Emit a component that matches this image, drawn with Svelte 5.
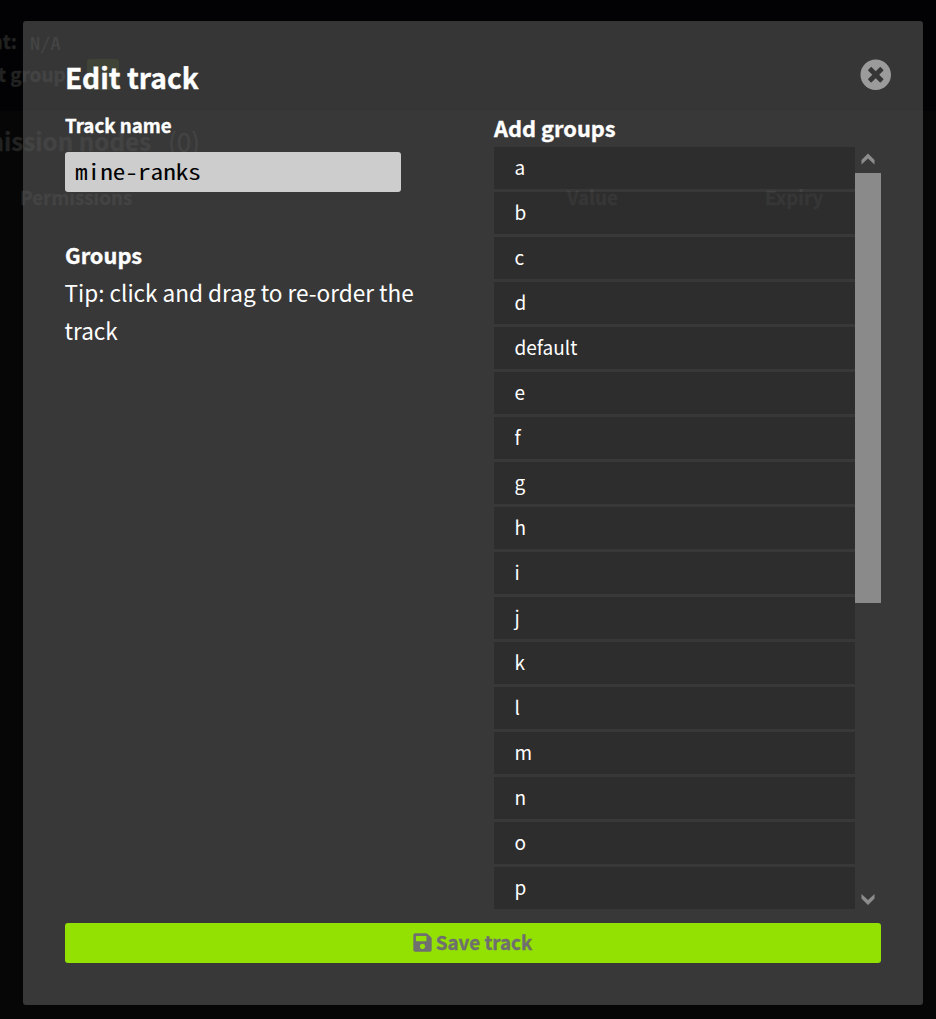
<script>
  const groups = ['a', 'b', 'c', 'd', 'default', 'e', 'f', 'g', 'h', 'i', 'j', 'k', 'l', 'm', 'n', 'o', 'p'];
  let name = $state('mine-ranks');
</script>

<div class="page">
  <div class="backdrop" aria-hidden="true">
    <div class="head">
      <div class="ghost parent">nt:</div>
      <div class="ghost na">N/A</div>
      <div class="ghost default">lt group:</div>
      <div class="badge"></div>
    </div>
    <div class="ghost nodes">mission nodes</div>
    <div class="ghost count">(0)</div>
    <div class="ghost col permissions">Permissions</div>
    <div class="ghost col value">Value</div>
    <div class="ghost col expiry">Expiry</div>
  </div>

  <div class="modal">
    <button class="close" aria-label="Close">
      <svg viewBox="0 0 512 512"><path fill="currentColor" d="M256 8C119 8 8 119 8 256s111 248 248 248 248-111 248-248S393 8 256 8zm121.6 313.1c4.7 4.7 4.7 12.3 0 17L338 377.6c-4.700 4.700-12.300 4.700-17 0L256 312l-65.100 65.600c-4.700 4.700-12.300 4.700-17 0L134.400 338c-4.700-4.700-4.700-12.300 0-17l65.600-65-65.600-65.100c-4.700-4.700-4.700-12.300 0-17l39.600-39.600c4.700-4.700 12.300-4.700 17 0l65 65.700 65.100-65.600c4.700-4.700 12.300-4.700 17 0l39.600 39.600c4.700 4.700 4.700 12.300 0 17L312 256l65.600 65.100z"/></svg>
    </button>
    <div class="columns">
      <section class="left">
        <h1>Edit track</h1>
        <label for="track">Track name</label>
        <div class="field"><input id="track" bind:value={name} spellcheck="false" /></div>
        <h2>Groups</h2>
        <p>Tip: click and drag to re-order the<br />track</p>
      </section>
      <section class="right">
        <h2>Add groups</h2>
        <div class="scroller">
          <ul>
            {#each groups as group}
              <li>{group}</li>
            {/each}
          </ul>
          <div class="bar">
            <svg viewBox="0 0 26 26"><path d="M13 6.500l6.500 6.500v4.500L13 11.500l-6.500 6v-4.500z" /></svg>
            <div class="thumb"></div>
            <svg class="down" viewBox="0 0 26 26"><path d="M13 4l6.500 6.500v4.500L13 9l-6.500 6v-4.500z" /></svg>
          </div>
        </div>
      </section>
    </div>
    <button class="save">
      <svg viewBox="0 0 448 512"><path fill="currentColor" d="M433.900 129.900l-83.900-83.900A48 48 0 0 0 316.100 32H48C21.500 32 0 53.500 0 80v352c0 26.500 21.500 48 48 48h352c26.500 0 48-21.500 48-48V163.900a48 48 0 0 0-14.100-34zM224 416c-35.300 0-64-28.700-64-64s28.700-64 64-64 64 28.700 64 64-28.700 64-64 64zm96-304.500V212c0 6.600-5.400 12-12 12H76c-6.600 0-12-5.400-12-12V108c0-6.600 5.400-12 12-12h228.500c3.200 0 6.200 1.300 8.500 3.500l3.500 3.500a12 12 0 0 1 3.500 8.500z"/></svg>
      <span>Save track</span>
    </button>
  </div>
</div>

<style>
  :global(body) { margin: 0; background: #050505; }
  * { box-sizing: border-box; }
  .page {
    position: relative;
    width: 936px;
    height: 1019px;
    padding: 21px 13px 14px 23px;
    overflow: hidden;
    background: #060606;
    color: #fff;
    font-family: "Noto Sans CJK SC", "Noto Sans", sans-serif;
  }
  .backdrop { position: absolute; inset: 0; font-weight: 700; white-space: nowrap; }
  .head { height: 111px; background: #020204; }
  .ghost { position: absolute; color: #222; line-height: 30px; font-size: 19px; -webkit-text-stroke: 0.35px; }
  .parent { right: 919px; top: 26px; }
  .na {
    left: 30px;
    top: 28px;
    color: #282828;
    font: 400 17px/30px "Noto Sans Mono CJK SC", "Liberation Mono", monospace;
    -webkit-text-stroke: 0;
    transform: scaleX(1.2);
    transform-origin: left;
  }
  .default { right: 864px; top: 59px; }
  .badge { position: absolute; left: 87px; top: 59px; width: 32px; height: 31px; border-radius: 3px; background: #182300; }
  .nodes { right: 785px; top: 126px; font-size: 24.200px; }
  .count { left: 168px; top: 126px; font-size: 26px; font-weight: 400; }
  .col { top: 182px; font-size: 18.800px; }
  .permissions { left: 20px; }
  .value { left: 567px; }
  .expiry { left: 765px; }

  .modal {
    position: relative;
    width: 900px;
    height: 984px;
    padding: 42px;
    border-radius: 3px;
    background: rgba(90, 90, 90, 0.6);
    display: flex;
    flex-direction: column;
    gap: 14px;
  }
  .close {
    position: absolute;
    top: 38px;
    right: 32px;
    width: 31px;
    height: 31px;
    padding: 0;
    border: 0;
    background: none;
    color: #9b9b9b;
  }
  .close svg { display: block; width: 31.500px; height: 31.500px; }
  .columns { flex: 1; min-height: 0; display: flex; justify-content: space-between; }
  .left { width: 360px; display: flex; flex-direction: column; }
  .right { width: 387px; padding-top: 46px; display: flex; flex-direction: column; }
  h1, h2, p { margin: 0; white-space: nowrap; }
  h1, h2, label, .save span { -webkit-text-stroke: 0.35px; }
  h1 { margin-top: -2px; font-size: 28.200px; line-height: 31px; font-weight: 700; }
  label { margin-top: 19px; font-size: 18.700px; line-height: 28px; font-weight: 700; }
  .field {
    width: 336px;
    height: 40px;
    margin-top: 13px;
    border-radius: 3px;
    background: #cdcdcd;
  }
  input {
    display: block;
    width: 280px;
    height: 38px;
    padding: 0 8.300px;
    border: 0;
    outline: 0;
    background: transparent;
    color: #000;
    font: 300 21px/38px "Noto Sans Mono CJK SC", "Liberation Mono", monospace;
    transform: scaleX(1.2);
    transform-origin: left;
  }
  h2 { font-size: 21.800px; line-height: 38px; font-weight: 700; }
  .left h2 { margin-top: 44px; }
  p { margin: -1px 0 0 -0.500px; font-size: 22.550px; line-height: 38px; }
  .right h2 { height: 38px; }
  .scroller { height: 762px; display: flex; }
  ul { flex: 1; margin: 0; padding: 0; list-style: none; display: flex; flex-direction: column; gap: 3px; }
  li { height: 42px; padding-left: 20.500px; background: rgba(0, 0, 0, 0.19); font-size: 19px; line-height: 40px; }
  .bar { width: 26px; display: flex; flex-direction: column; }
  .bar svg { width: 26px; height: 26px; fill: #8c8c8c; }
  .thumb { height: 430px; background: #8a8a8a; }
  .bar .down { margin-top: auto; transform: rotate(180deg); }
  .save {
    height: 40px;
    padding: 0 1px 0 0;
    border: 0;
    border-radius: 3px;
    background: #93e003;
    color: #6f6f6f;
    display: flex;
    align-items: center;
    justify-content: center;
    gap: 4px;
    font: 700 18.800px/38px "Noto Sans CJK SC", "Noto Sans", sans-serif;
  }
  .save span { height: 40px; }
  .save svg { width: 19px; height: 21px; margin-top: -1px; }
</style>
